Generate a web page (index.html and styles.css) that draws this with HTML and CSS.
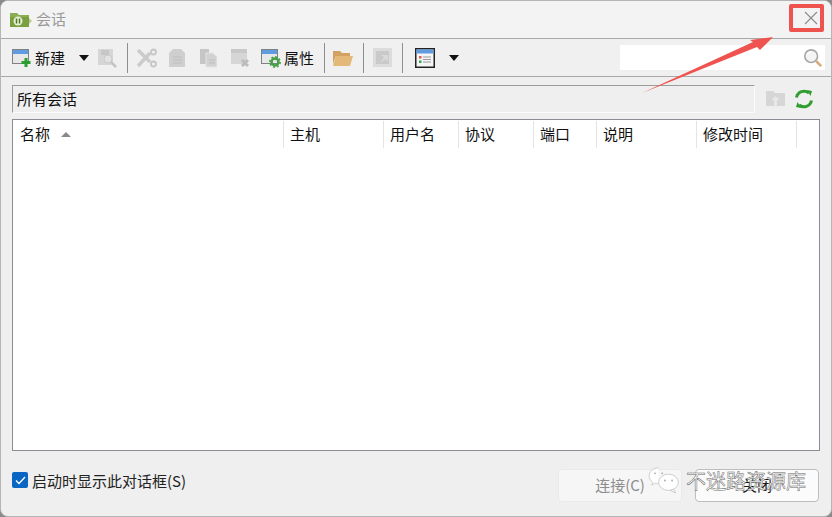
FILE: index.html
```html
<!DOCTYPE html>
<html lang="zh">
<head>
<meta charset="utf-8">
<title>会话</title>
<link rel="stylesheet" href="styles.css">
</head>
<body>
<div class="window">
  <header class="titlebar">
    <svg class="appicon" width="22" height="16" viewBox="0 0 22 16"><path d="M0 2h7l2 2h10v12H0z" fill="#8cad52"/><path d="M0 6h19v10H0z" fill="#7a9f3f"/><path d="M19 7l3 3-3 3z" fill="#b9c99a"/><circle cx="8" cy="10" r="4.5" fill="#e8f0d8"/><path d="M6.500 7.500v5M9.500 7.500v5" stroke="#4f7a22" stroke-width="1.500"/></svg>
    <span class="title">会话</span>
  </header>
  <div class="toolbar">
    <svg class="ic" width="20" height="20" viewBox="0 0 20 20"><rect x="0.500" y="1.500" width="16" height="14" fill="#e8e8e8" stroke="#7c8288"/><rect x="1" y="2" width="15" height="4" fill="#5e9be0"/><path d="M14 10v9M9.500 14.500h9" stroke="#2c9e2c" stroke-width="3"/></svg>
    <span class="label new">新建</span>
    <span class="caret c1"></span>
    <svg class="ic" width="20" height="20" viewBox="0 0 20 20"><rect x="1" y="1" width="15" height="16" fill="#d6d6d6"/><rect x="4" y="2" width="8" height="5" fill="#c6c6c6"/><circle cx="11" cy="11" r="4" fill="#e2e2e2" stroke="#c8c8c8"/><path d="M14 14l5 5" stroke="#c4c4c4" stroke-width="2.500"/></svg>
    <span class="sep s1"></span>
    <svg class="ic" width="20" height="20" viewBox="0 0 20 20"><path d="M1 2l12 12M1 18L13 5" stroke="#cbcbcb" stroke-width="3.500"/><circle cx="16.500" cy="4" r="2.500" fill="none" stroke="#c6c6c6" stroke-width="1.800"/><circle cx="16.500" cy="16" r="2.500" fill="none" stroke="#c6c6c6" stroke-width="1.800"/></svg>
    <svg class="ic g11" width="18" height="20" viewBox="0 0 18 20"><path d="M5 1h8l4 4v14H1V5z" fill="#cfcfcf"/><path d="M5 9h9M5 12h9M5 15h9" stroke="#bdbdbd"/></svg>
    <svg class="ic g13" width="18" height="20" viewBox="0 0 18 20"><path d="M1 1h9v15H1z" fill="#c6c6c6"/><path d="M7 5h7l4 4v10H7z" fill="#d2d2d2" stroke="#e4e4e4"/><path d="M10 12h6M10 15h6" stroke="#bdbdbd"/></svg>
    <svg class="ic g13" width="20" height="20" viewBox="0 0 20 20"><rect x="1" y="1" width="16" height="15" fill="#d6d6d6"/><rect x="1" y="1" width="16" height="4" fill="#c8c8c8"/><path d="M12 12l6 6M18 12l-6 6" stroke="#bcbcbc" stroke-width="3"/></svg>
    <svg class="ic g11" width="20" height="20" viewBox="0 0 20 20"><rect x="0.500" y="1.500" width="16" height="14" fill="#e8e8e8" stroke="#7c8288"/><rect x="1" y="2" width="15" height="4" fill="#5e9be0"/><circle cx="14" cy="14" r="3.500" fill="none" stroke="#43a047" stroke-width="2.500"/><circle cx="14" cy="14" r="5.200" fill="none" stroke="#43a047" stroke-width="1.500" stroke-dasharray="2 2"/></svg>
    <span class="label prop">属性</span>
    <span class="sep s2"></span>
    <svg class="ic" width="20" height="18" viewBox="0 0 20 18"><path d="M0 2h7l2 2h8v3H3L0 15z" fill="#d3a262"/><path d="M3 7h17l-3 10H0z" fill="#e3b878"/></svg>
    <span class="sep s3"></span>
    <svg class="ic" width="19" height="19" viewBox="0 0 19 19"><rect width="19" height="19" fill="#dcdcdc"/><rect x="3" y="3" width="13" height="13" fill="#c9c9c9"/><path d="M7 15l4-6-3-2h7v7l-2-3z" fill="#dadada"/></svg>
    <span class="sep s4"></span>
    <svg class="ic" width="20" height="20" viewBox="0 0 20 20"><rect x="0.750" y="0.750" width="18.500" height="18.500" fill="#f5f5f5" stroke="#222" stroke-width="1.500"/><rect x="1.500" y="1.500" width="17" height="4" fill="#5e9be0"/><rect x="4" y="8" width="2.500" height="2.500" fill="#e25b4d"/><rect x="4" y="12.500" width="2.500" height="2.500" fill="#3aa655"/><path d="M8 9h8M8 11.500h8M8 14h8" stroke="#9a9a9a"/></svg>
    <span class="caret c2"></span>
    <div class="search">
      <svg width="20" height="20" viewBox="0 0 22 22"><circle cx="9" cy="9" r="7" fill="#f4f4f4" stroke="#a8a8a8" stroke-width="1.800"/><path d="M5 8a4 4 0 0 1 4-4" fill="none" stroke="#fff" stroke-width="1.500"/><path d="M14.500 14.500l5.500 5.500" stroke="#d6aa7a" stroke-width="2.800"/></svg>
    </div>
  </div>
  <div class="pathrow">
    <div class="path">所有会话</div>
    <svg class="uplevel" width="19" height="18" viewBox="0 0 19 18"><path d="M0 1h7l2 2h10v13H0z" fill="#d6d6d6"/><path d="M9.500 6l-4 4h2.500v7h3v-7h2.500z" fill="#e8e8e8"/></svg>
    <svg class="refresh" width="20" height="20" viewBox="0 0 20 20"><path d="M2.500 8.500A7.700 7.700 0 0 1 15 4" fill="none" stroke="#2f9e2f" stroke-width="3"/><path d="M13 1l5 1-1.500 5z" fill="#2f9e2f"/><path d="M17.500 11.500A7.700 7.700 0 0 1 5 16" fill="none" stroke="#2f9e2f" stroke-width="3"/><path d="M7 19l-5-1 1.500-5z" fill="#2f9e2f"/></svg>
  </div>
  <section class="list">
    <div class="thead">
      <div class="th w-name">名称<span class="sort"></span></div>
      <div class="th w-host">主机</div>
      <div class="th w-std">用户名</div>
      <div class="th w-std">协议</div>
      <div class="th w-port">端口</div>
      <div class="th w-host">说明</div>
      <div class="th w-host">修改时间</div>
    </div>
  </section>
  <footer class="foot">
    <label class="check">
      <span class="box"><svg width="11" height="9" viewBox="0 0 11 9"><path d="M1 4.500l3 3 6-6.500" fill="none" stroke="#fff" stroke-width="1.300"/></svg></span>
      <span>启动时显示此对话框(S)</span>
    </label>
    <div class="buttons">
      <button class="btn connect">连接(C)</button>
      <button class="btn close">关闭</button>
    </div>
  </footer>

  <div class="redbox">
    <svg width="14" height="14" viewBox="0 0 14 14"><path d="M1 1l12 12M13 1L1 13" stroke="#8a8a8a" stroke-width="1.100"/></svg>
  </div>
  <svg class="arrow" width="140" height="66" viewBox="0 0 140 66"><path d="M1 63L112 12l-3-2 23-3-13 13-3-3z" fill="#ef5350"/></svg>
  <div class="mark">
    <svg width="32" height="27" viewBox="0 0 34 30"><path d="M11 1C5 1 .500 5 .500 10c0 3 1.500 5 4 7l-1 3 4-2c1 .3 2 .5 3 .5" fill="#fff" stroke="#c8c8c8"/><ellipse cx="22" cy="17" rx="11" ry="9" fill="#fff" stroke="#c8c8c8"/><path d="M28 25l2 4-6-3z" fill="#fff" stroke="#c8c8c8"/><circle cx="7" cy="7" r="1" fill="#aaa"/><circle cx="15" cy="7" r="1" fill="#aaa"/><circle cx="18" cy="15" r="1" fill="#aaa"/><circle cx="26" cy="15" r="1" fill="#aaa"/></svg>
    <span class="marktext">不迷路资源库</span>
  </div>
</div>
</body>
</html>
```
FILE: styles.css
```css
* { box-sizing: border-box; }
html, body { margin: 0; padding: 0; background: #8a8a8a; }
body {
  width: 832px;
  height: 517px;
  overflow: hidden;
  font-family: "Noto Sans CJK SC", "Liberation Sans", sans-serif;
  font-size: 15px;
  color: #111;
}
.window {
  position: relative;
  width: 832px;
  height: 517px;
  background: #efefef;
  border: 1px solid #b5b5b5;
  border-radius: 8px;
  overflow: hidden;
}
.titlebar {
  display: flex;
  align-items: center;
  height: 38px;
  padding-left: 9px;
  background: #f3f3f3;
  border-bottom: 1px solid #a8a8a8;
}
.title { margin-left: 4px; padding-bottom: 2px; color: #9a9a9a; }
.appicon { display: block; margin-top: -2px; }
.toolbar {
  display: flex;
  align-items: center;
  height: 38px;
  background: #f0f0f0;
  border-bottom: 1px solid #a8a8a8;
  padding-left: 11px;
}
.ic { display: block; flex: none; }
.label { line-height: 20px; }
.new { margin-left: 3px; }
.prop { margin-left: 3px; }
.caret {
  width: 0;
  height: 0;
  border-left: 5.500px solid transparent;
  border-right: 5.500px solid transparent;
  border-top: 6px solid #111;
  flex: none;
}
.c1 { margin: 1px 8px 0 14px; }
.c2 { margin: 1px 0 0 14px; }
.sep { width: 1px; height: 30px; background: #8f8f8f; flex: none; }
.s1 { margin: 0 9px 0 10px; }
.s2 { margin: 0 8px 0 10px; }
.s3 { margin: 0 9px 0 10px; }
.s4 { margin: 0 12px 0 10px; }
.g11 { margin-left: 11px; }
.g13 { margin-left: 13px; }
.search {
  margin-left: auto;
  margin-right: 6px;
  width: 205px;
  height: 25px;
  background: #fff;
  display: flex;
  align-items: center;
  justify-content: flex-end;
}
.search svg { display: block; margin-right: 2px; margin-top: 1px; }
.pathrow {
  display: flex;
  align-items: center;
  height: 28px;
  margin: 8px 0 0 11px;
}
.path {
  width: 743px;
  height: 28px;
  padding-left: 4px;
  line-height: 25px;
  background: #efefef;
  border-top: 1px solid #9c9c9c;
  border-left: 1px solid #9c9c9c;
  border-right: 1px solid #fafafa;
  border-bottom: 1px solid #fafafa;
}
.uplevel { margin-left: 11px; display: block; }
.refresh { margin-left: 9px; display: block; }
.list {
  height: 332px;
  margin: 6px 11px 0 11px;
  background: #fff;
  border: 1px solid #8c8c96;
}
.thead { display: flex; height: 27px; margin-top: 1px; }
.th {
  height: 27px;
  line-height: 25px;
  padding-left: 6px;
  border-right: 1px solid #e4e4e4;
  flex: none;
}
.w-name { width: 271px; padding-left: 7px; display: flex; align-items: center; padding-bottom: 2px; }
.w-host { width: 100px; }
.w-std { width: 75px; }
.w-port { width: 63px; }
.sort {
  width: 0;
  height: 0;
  margin-left: 11px;
  margin-top: 1px;
  border-left: 5px solid transparent;
  border-right: 5px solid transparent;
  border-bottom: 5px solid #8a8a8a;
}
.foot {
  display: flex;
  justify-content: space-between;
  align-items: flex-start;
  padding: 18px 12px 0 11px;
}
.check { display: flex; align-items: center; height: 22px; gap: 4px; color: #222; }
.box {
  width: 16px;
  height: 16px;
  background: #0a66c2;
  border-radius: 2px;
  display: flex;
  align-items: center;
  justify-content: center;
}
.buttons { display: flex; gap: 13px; }
.btn {
  width: 124px;
  height: 33px;
  border-radius: 4px;
  font-family: inherit;
  font-size: 15px;
  background: #fbfbfb;
  border: 1px solid #bdbdbd;
  color: #1a1a1a;
  padding: 0 0 2px;
}
.connect { background: #f6f6f6; border-color: #eaeaea; color: #8d8d8d; }
.redbox {
  position: absolute;
  left: 788px;
  top: 3px;
  width: 35px;
  height: 28px;
  border: 4px solid #ef5350;
  border-radius: 2px;
  display: flex;
  align-items: center;
  justify-content: center;
}
.redbox svg { display: block; margin-left: 8px; }
.arrow { position: absolute; left: 640px; top: 29px; display: block; }
.mark {
  position: absolute;
  left: 647px;
  top: 466px;
  display: flex;
  align-items: flex-start;
  gap: 6px;
}
.mark svg { display: block; }
.marktext {
  font-size: 20px;
  line-height: 28px;
  color: #fff;
  -webkit-text-stroke: 0.5px #666;
}
```
